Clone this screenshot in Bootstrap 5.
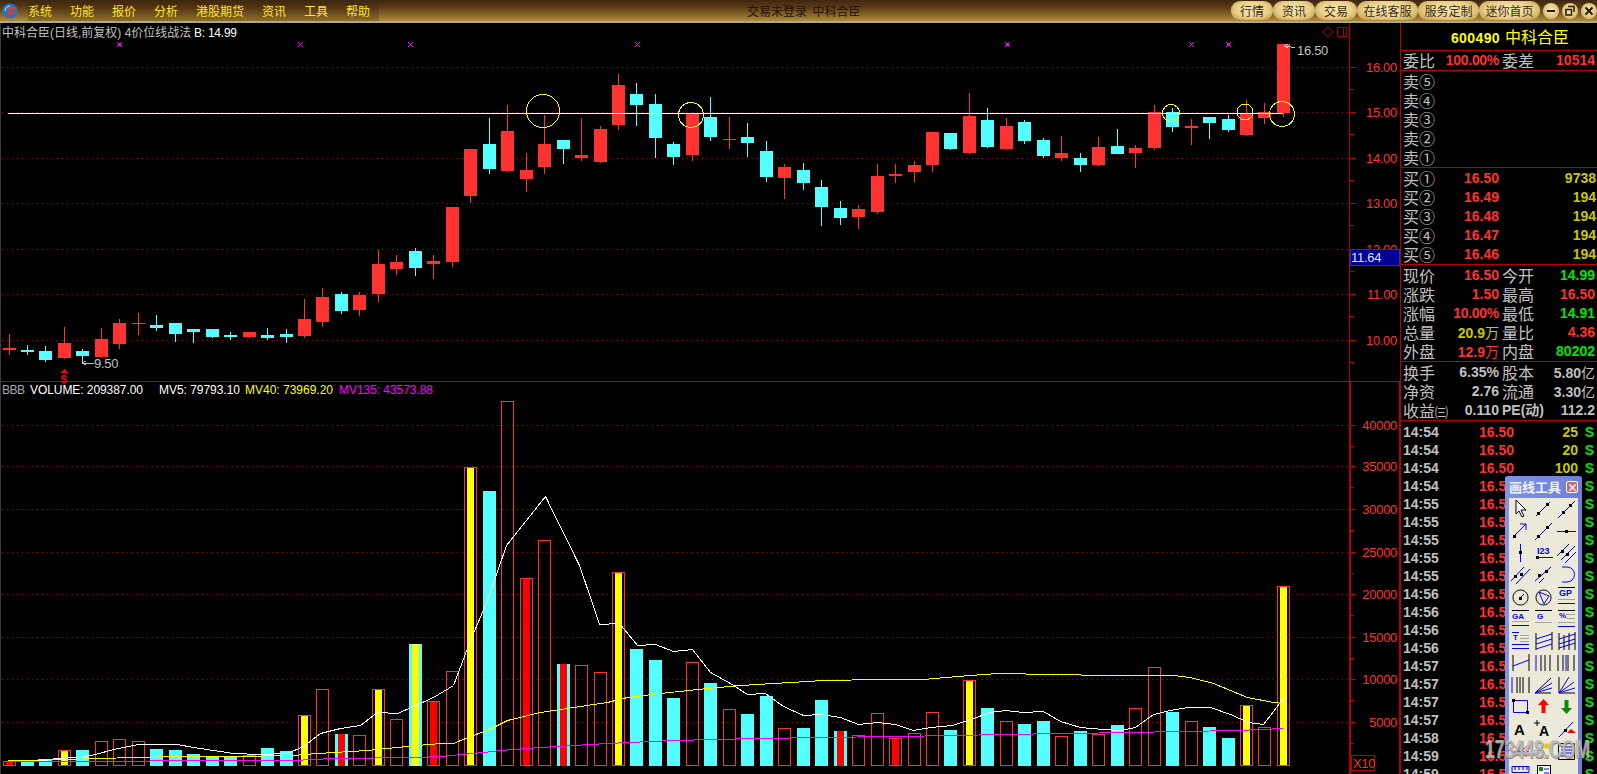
<!DOCTYPE html>
<html lang="zh-CN">
<head>
  <meta charset="UTF-8" />
  <meta name="viewport" content="width=device-width, initial-scale=1" />
  <title>中科合臣 日线</title>
  <link href="https://cdn.jsdelivr.net/npm/bootstrap@5.3.2/dist/css/bootstrap.min.css" rel="stylesheet" />
  <style>
    html, body { height: 774px; overflow: hidden; background: #000; }
    body { font-family: "Liberation Sans", "Noto Sans CJK SC", sans-serif; color: #c0c0c0; }
    .cjk { font-family: "Noto Sans CJK SC", sans-serif; }

    .title-strip {
      height: 21px;
      background: linear-gradient(#3e2610 0, #5c3c16 35%, #86662a 70%, #b08c38 100%);
    }
    .title-rule { height: 2px; background: #a8a8a0; }
    .logo-mark { margin: 0 10px 0 2px; }
    .menu-strip { gap: 18px; height: 21px; padding-right: 9px; background: rgba(60, 36, 10, .28); }
    .menu-strip span { font-size: 12px; color: #ffe628; line-height: 21px; white-space: nowrap; }
    .win-title { left: 747px; top: 0; font-size: 12px; line-height: 21px; color: #1e1204; }
    .tool-pill {
      height: 19px; padding: 0; font-size: 12px; line-height: 19px; color: #3a2a10; border: 0;
      --bs-btn-border-radius: 9px;
      background: radial-gradient(ellipse at 50% 45%, #f6eab8 0, #e8d088 55%, #b48e3c 100%);
    }
    .pill-sm { width: 42px; }
    .pill-lg { width: 61px; }
    .win-btn {
      width: 16px; height: 16px; border-radius: 50%; margin-left: 3px;
      background: radial-gradient(circle at 50% 45%, #f8edc0 0, #d8bc70 70%, #9c7a30 100%);
    }

    .chart-wrap { width: 1400px; flex: none; }
    .chart-wrap svg { display: block; }
    .crisp * { shape-rendering: crispEdges; }
    .chart-wrap text { font-family: "Liberation Sans", "Noto Sans CJK SC", sans-serif; shape-rendering: auto; }

    .quote-panel { width: 197px; flex: none; border-left: 1px solid #b80000; }
    .q-sec { border-bottom: 1px solid #b80000; }
    .q-head { height: 28px; padding-left: 22px; font-size: 16px; color: #ffff00; line-height: 27px; }
    .q-head b { font-size: 14px; letter-spacing: .4px; margin-right: 5px; }
    .q-ratio { height: 20px; }
    .q-block { height: 97px; padding-top: 1px; }
    .q-extra { height: 59px; padding-top: 1px; }
    .q-row {
      display: grid; grid-template-columns: 38px 58px 38px 58px; height: 19px; line-height: 19px;
      padding-left: 2px; white-space: nowrap;
    }
    .q-row.book { grid-template-columns: 38px 58px 97px; }
    .q-lab { font-size: 16px; color: #c0c0c0; font-family: "Noto Sans CJK SC", sans-serif; }
    .q-lab.second { padding-left: 3px; }
    .q-lab small { font-size: 13px; }
    .q-lab.pe { font-size: 14px; font-weight: 700; font-family: "Liberation Sans", "Noto Sans CJK SC", sans-serif; }
    .q-val { font-size: 14px; font-weight: 700; text-align: right; }
    .q-val em { font-style: normal; font-family: "Noto Sans CJK SC", sans-serif; font-weight: 400; font-size: 14px; }
    .q-val.pct { letter-spacing: -.3px; }
    .tone-red { color: #ff3232; }
    .tone-green { color: #00e600; }
    .tone-ylw { color: #c8c800; }
    .tone-gray { color: #c0c0c0; }

    .tick-list { padding-top: 2px; }
    .tick-row {
      display: grid; grid-template-columns: 38px 73px 64px 19px; height: 18px; line-height: 18px;
      font-size: 14px; font-weight: 700; padding-left: 2px;
    }
    .tick-row > :nth-child(2), .tick-row > :nth-child(3) { text-align: right; }
    .tick-row > :nth-child(4) { text-align: right; padding-right: 3px; color: #00e600; }

    .draw-tools {
      left: 1505px; top: 476px; width: 77px; height: 330px;
      background: linear-gradient(90deg, #7f94e6 0, #6d80d4 100%);
      padding: 0 4px;
      border-radius: 3px 3px 0 0;
    }
    .draw-title { height: 22px; color: #eef1ff; font-size: 13px; font-weight: 700; white-space: nowrap; }
    .draw-close {
      width: 12px; height: 12px; flex: none; border: 1px solid #fff; border-radius: 2px; background: #c06a78;
      color: #fff; font-size: 11px; line-height: 10px; text-align: center; font-weight: 700;
    }
    .draw-grid { display: grid; grid-template-columns: repeat(3, 23px); grid-auto-rows: 22px; background: #ece9d8; width: 69px; }
    .draw-grid svg { display: block; }
    .draw-grid text { font-family: "Liberation Sans", sans-serif; font-weight: 700; }

    .site-mark {
      left: 1485px; top: 730px; font-size: 26px; font-weight: 700; color: rgba(225, 225, 225, .62);
      transform: scaleX(.68); transform-origin: left center; white-space: nowrap; pointer-events: none;
      text-shadow: 1px 1px 0 rgba(90, 90, 90, .7), -1px 0 0 rgba(120, 120, 120, .5);
    }
  </style>
</head>
<body>
  <div class="d-flex flex-column vh-100 position-relative overflow-hidden">

    <!-- title bar -->
    <div class="title-strip d-flex align-items-center flex-shrink-0 position-relative">
      <svg class="logo-mark" width="16" height="16" viewBox="0 0 16 16">
        <circle cx="8" cy="8" r="7.5" fill="#1b78c8" />
        <path d="M3 8a5 5 0 0 1 5-5" stroke="#bfe4ff" fill="none" />
        <path d="M5 14 L7 4 H15 L14 6.500 H9.500 L9 8.500 H13 L12.500 10.500 H8.500 L7.700 14 Z" fill="#e83a20" />
      </svg>
      <div class="menu-strip d-flex cjk">
        <span>系统</span><span>功能</span><span>报价</span><span>分析</span><span>港股期货</span><span>资讯</span><span>工具</span><span>帮助</span>
      </div>
      <div class="win-title position-absolute cjk">交易未登录&nbsp;&nbsp;中科合臣</div>
      <div class="d-flex align-items-center ms-auto cjk">
        <button class="btn tool-pill pill-sm">行情</button>
        <button class="btn tool-pill pill-sm">资讯</button>
        <button class="btn tool-pill pill-sm">交易</button>
        <button class="btn tool-pill pill-lg">在线客服</button>
        <button class="btn tool-pill pill-lg">服务定制</button>
        <button class="btn tool-pill pill-lg">迷你首页</button>
        <svg class="win-btn" viewBox="0 0 16 16"><path d="M4 8H12" stroke="#2a1a04" stroke-width="2" /></svg>
        <svg class="win-btn" viewBox="0 0 16 16"><path d="M6 3.500H12V9M4 6.500H9.500V12H4Z" stroke="#2a1a04" stroke-width="1.500" fill="none" /></svg>
        <svg class="win-btn" viewBox="0 0 16 16"><path d="M4.500 4.500L11.500 11.500M11.500 4.500L4.500 11.500" stroke="#2a1a04" stroke-width="2" /></svg>
      </div>
    </div>
    <div class="title-rule"></div>

    <div class="d-flex flex-grow-1 overflow-hidden">
      <!-- kline and volume -->
      <div class="chart-wrap">
        <svg id="chart" class="crisp" width="1400" height="751" viewBox="0 23 1400 751"></svg>
      </div>

      <!-- quote panel -->
      <div class="quote-panel overflow-hidden">
        <div class="q-sec q-head text-center"><b>600490</b><span class="cjk">中科合臣</span></div>
        <div class="q-sec q-ratio">
          <div class="q-row"><span class="q-lab">委比</span><span class="q-val tone-red pct">100.00%</span><span class="q-lab second">委差</span><span class="q-val tone-red">10514</span></div>
        </div>
        <div class="q-sec q-block" id="sellBook"></div>
        <div class="q-sec q-block" id="buyBook"></div>
        <div class="q-sec q-block" id="stats"></div>
        <div class="q-sec q-extra">
          <div class="q-row"><span class="q-lab">换手</span><span class="q-val tone-gray">6.35%</span><span class="q-lab second">股本</span><span class="q-val tone-gray">5.80<em>亿</em></span></div>
          <div class="q-row"><span class="q-lab">净资</span><span class="q-val tone-gray">2.76</span><span class="q-lab second">流通</span><span class="q-val tone-gray">3.30<em>亿</em></span></div>
          <div class="q-row"><span class="q-lab">收益<small>㈢</small></span><span class="q-val tone-gray">0.110</span><span class="q-lab pe second">PE(动)</span><span class="q-val tone-gray">112.2</span></div>
        </div>
        <div class="tick-list" id="ticks"></div>
      </div>
    </div>

    <!-- floating drawing palette -->
    <div class="draw-tools position-absolute overflow-hidden">
      <div class="draw-title d-flex align-items-center justify-content-between cjk">
        <span>画线工具</span><span class="draw-close">×</span>
      </div>
      <div class="draw-grid" id="drawGrid"></div>
    </div>

    <div class="site-mark position-absolute">173448.COM</div>
  </div>

  <script src="https://cdn.jsdelivr.net/npm/bootstrap@5.3.2/dist/js/bootstrap.bundle.min.js"></script>
  <script>
    const RED = "#ff3232", CYAN = "#54ffff", YEL = "#ffff00", MAG = "#ff00ff", AXIS = "#b80000";

    // high, body top, body bottom, low, r/c
    const candles = [
      [334,348,350,355,"r"],[345,350,352,355,"c"],[346,351,360,362,"c"],[327,343,358,359,"r"],[349,351,356,363,"c"],
      [328,339,357,357,"r"],[319,323,344,349,"r"],[313,323,324,335,"r"],[315,325,328,331,"c"],[323,323,334,342,"c"],
      [329,329,332,343,"c"],[329,329,337,338,"c"],[332,335,337,340,"c"],[332,332,337,338,"r"],[328,335,338,340,"c"],
      [329,334,337,343,"c"],[299,319,336,338,"r"],[288,297,322,327,"r"],[292,294,311,314,"c"],[292,295,310,316,"r"],
      [250,264,294,302,"r"],[255,262,269,275,"r"],[248,251,268,276,"c"],[255,261,264,279,"r"],[207,207,262,267,"r"],
      [149,149,196,203,"r"],[118,144,169,174,"c"],[105,131,171,172,"r"],[153,170,179,192,"r"],[115,144,167,174,"r"],
      [140,140,149,164,"c"],[118,155,158,161,"r"],[126,129,162,163,"r"],[74,85,125,130,"r"],[83,94,105,126,"c"],
      [94,104,138,158,"c"],[142,144,157,165,"c"],[112,113,155,161,"r"],[97,117,137,141,"c"],[117,139,140,149,"r"],
      [123,137,143,157,"c"],[141,151,177,182,"c"],[164,167,178,199,"r"],[163,170,183,190,"c"],[180,187,207,226,"c"],
      [201,208,218,225,"c"],[205,209,217,229,"r"],[164,176,212,214,"r"],[164,174,176,183,"r"],[161,165,172,182,"r"],
      [132,132,165,172,"r"],[133,133,149,150,"c"],[93,116,153,154,"r"],[108,120,147,148,"c"],[118,126,149,150,"r"],
      [120,122,141,144,"c"],[138,140,156,158,"c"],[136,153,158,161,"r"],[153,158,165,172,"c"],[137,147,165,166,"r"],
      [129,146,154,154,"c"],[145,148,153,168,"r"],[105,112,148,150,"r"],[108,112,127,132,"c"],[119,126,128,145,"r"],
      [117,117,123,139,"c"],[115,119,130,132,"c"],[100,113,135,136,"r"],[103,112,118,124,"r"],[44,44,113,117,"r"]
    ];

    // top y, kind: R outline, C cyan, plus Y / R middle stripe
    const bars = [
      [761,"RR"],[760,"C"],[760,"C"],[750,"RY"],[750,"C"],[741,"R"],[739,"R"],[741,"R"],[749,"C"],[750,"C"],
      [754,"C"],[756,"C"],[756,"C"],[755,"R"],[748,"C"],[751,"C"],[715,"RY"],[689,"R"],[734,"CR"],[735,"R"],
      [689,"RY"],[719,"R"],[644,"CY"],[701,"RR"],[671,"R"],[467,"RY"],[491,"C"],[401,"R"],[578,"RR"],[540,"R"],
      [664,"CR"],[665,"R"],[672,"R"],[572,"RY"],[649,"C"],[660,"C"],[698,"C"],[662,"R"],[683,"C"],[709,"R"],
      [714,"C"],[696,"C"],[728,"R"],[728,"C"],[700,"C"],[731,"CR"],[735,"R"],[713,"R"],[738,"RR"],[733,"R"],
      [712,"R"],[730,"C"],[680,"RY"],[708,"C"],[721,"R"],[724,"C"],[721,"C"],[736,"R"],[731,"C"],[734,"R"],
      [725,"C"],[708,"R"],[667,"R"],[712,"C"],[721,"R"],[727,"C"],[738,"C"],[705,"RY"],[727,"R"],[586,"RY"]
    ];

    const mv5 = "8,760 45,760 55,758 80,757 95,754 113,749 138,744 177,744 193,747 213,750 233,753 260,754 287,753 303,746 320,733 340,728 360,725 377,712 397,713 413,706 433,697 453,685 470,640 487,600 506,545 545,496 579,565 591,600 599,624 619,623 637,645 655,644 673,651 692,649 710,672 730,683 747,694 765,693 783,706 803,715 820,714 840,717 858,724 877,722 895,724 913,730 930,727 952,725 970,719 990,712 1005,710 1023,712 1043,711 1060,721 1080,727 1103,729 1120,730 1135,727 1153,714 1170,710 1187,707 1210,707 1230,714 1248,722 1263,724 1283,698";
    const mv40 = "8,760 67,759 100,758 133,757 183,756 233,756 293,755 317,753 367,750 417,745 440,743 453,743 470,736 487,730 507,720 540,712 573,707 607,702 627,697 660,693 707,688 740,685 790,682 823,680 880,679 923,679 957,676 997,673 1053,674 1107,675 1173,675 1190,677 1213,683 1247,697 1273,702 1283,703";
    const mv135 = "8,761 293,760 333,758 417,757 440,756 483,752 500,750 540,747 607,743 673,740 757,738 890,736 960,735 997,734 1070,733 1127,732 1237,730 1283,728";

    const chart = document.getElementById("chart");
    let out = "";
    const rect = (x, y, w, h, f) => `<rect x="${x}" y="${y}" width="${w}" height="${h}" fill="${f}"/>`;
    const hline = (y, x1, x2) => `<line x1="${x1}" x2="${x2}" y1="${y + 0.5}" y2="${y + 0.5}" stroke="#b00000" stroke-dasharray="1 4"/>`;
    const label = (x, y, t, f, extra = "") => `<text x="${x}" y="${y}" font-size="13" letter-spacing="-.3" fill="${f}" ${extra}>${t}</text>`;
    const barX = i => Math.round(8.5 + 18.47 * i);

    out += rect(0, 23, 1, 751, "#3a3a3a");

    // grid and axes
    [67, 112, 158, 203, 249, 294, 340].forEach((y, i) => {
      out += hline(y, 2, 1349) + rect(1350, y, 6, 1, AXIS) + rect(1350, y + 22, 4, 1, AXIS);
      if (y !== 249) out += label(1397, y + 5, ["16.00","15.00","14.00","13.00","","11.00","10.00"][i], RED, 'text-anchor="end"');
    });
    out += label(1397, 254, "12.00", RED, 'text-anchor="end"');
    [425, 466, 509, 552, 594, 637, 679, 722].forEach((y, i) => {
      out += hline(y, 2, 1349) + rect(1350, y, 6, 1, AXIS) + rect(1350, y + 21, 4, 1, AXIS);
      out += label(1397, y + 5, String(40000 - i * 5000), RED, 'text-anchor="end"');
    });
    out += rect(1349, 23, 1, 751, AXIS) + rect(1350, 382, 1, 392, AXIS) + rect(0, 381, 1400, 1, AXIS) + rect(1399, 382, 1, 392, AXIS);

    // candles
    candles.forEach((c, i) => {
      const x = barX(i), col = c[4] === "r" ? RED : CYAN;
      out += rect(x, c[0], 1, c[3] - c[0], col);
      out += rect(x - 6, c[1], 13, Math.max(c[2] - c[1], 1), col);
    });

    // signal marks on top row, drawn pixel by pixel as small crosses
    [[119,2],[300,1],[410,1],[637,1],[1007,2],[1191,1],[1228,2]].forEach(m => {
      for (let d = -2; d <= 2; d++) {
        out += rect(m[0] + d, 44 + d, 1, 1, MAG) + rect(m[0] + d, 44 - d, 1, 1, MAG);
      }
      out += rect(m[0] - m[1] + 1, 44 - m[1] + 1, 2 * m[1] - 1, 2 * m[1] - 1, MAG);
    });

    // 4 price line
    out += rect(8, 113, 1275, 1, "#ffffff");
    [[543,111,16.5],[691,115,12.5],[1171,113,8.5],[1245,112,8],[1282,114,12.5]].forEach(c => {
      out += `<circle cx="${c[0]}" cy="${c[1]}" r="${c[2]}" fill="none" stroke="${YEL}"/>`;
    });

    // high and low notes
    out += `<path d="M1288 44L1284 46L1288 48M1284 46L1291 47L1295 48" fill="none" stroke="#c0c0c0"/>` + label(1297, 55, "16.50", "#c0c0c0");
    out += `<path d="M86 361L82 363L86 365M82 363H94" fill="none" stroke="#c0c0c0"/>` + label(94, 368, "9.50", "#c0c0c0");
    out += `<path d="M64 369L60 373H68Z" fill="#ff0000"/>` + `<text x="60.500" y="383" font-size="10" font-weight="700" fill="#ff0000">S</text>`;

    // corner marks
    out += `<path d="M1328 27L1333 32L1328 37L1323 32Z" fill="none" stroke="#a80000"/>` + `<rect x="1337.500" y="27.500" width="9" height="9" fill="none" stroke="#a80000"/><path d="M1343.500 27V37" stroke="#a80000"/>`;

    // crosshair price tag
    out += `<rect x="1350" y="249" width="49" height="16" fill="#000090" stroke="#2030c0"/>` + label(1351, 262, "11.64", "#d8e4ff");

    // headings
    out += `<text x="2" y="37" font-size="12" fill="#c0c0c0">中科合臣(日线,前复权) 4价位线战法</text>` + `<text x="194" y="37" font-size="12" fill="#ffffff" textLength="43">B: 14.99</text>`;
    out += `<text x="2" y="394" font-size="12" fill="#a8a8a8" textLength="23">BBB</text>`;
    out += `<text x="30" y="394" font-size="12" fill="#ffffff" textLength="113">VOLUME: 209387.00</text>`;
    out += `<text x="159" y="394" font-size="12" fill="#ffffff" textLength="81">MV5: 79793.10</text>`;
    out += `<text x="245" y="394" font-size="12" fill="${YEL}" textLength="88">MV40: 73969.20</text>`;
    out += `<text x="339" y="394" font-size="12" fill="${MAG}" textLength="94">MV135: 43573.88</text>`;

    // volume bars
    bars.forEach((b, i) => {
      const x = barX(i), top = b[0], h = 766 - top, kind = b[1];
      if (kind[0] === "C") out += rect(x - 6, top, 13, h, CYAN);
      if (kind[1] === "Y") out += rect(x - 3, top, 7, h, YEL);
      if (kind[1] === "R") out += rect(x - 3, top, 7, h, "#ff0000");
      if (kind[0] === "R") out += `<rect x="${x - 5.5}" y="${top + 0.5}" width="12" height="${h - 1}" fill="none" stroke="${RED}"/>`;
    });

    // moving averages, half pixel shift keeps the flat parts from dropping out
    out += `<g transform="translate(.5 .5)">`;
    out += `<polyline points="${mv5}" fill="none" stroke="#ffffff"/>`;
    out += `<polyline points="${mv40}" fill="none" stroke="${YEL}"/>`;
    out += `<polyline points="${mv135}" fill="none" stroke="${MAG}"/>`;
    out += `</g>`;

    // multiplier box
    out += `<rect x="1351.500" y="755.500" width="23" height="15" fill="none" stroke="${AXIS}"/>` + label(1353, 768, "X10", RED);
    chart.innerHTML = out;

    // order book
    const book = (id, prefix, marks, rows) => {
      document.getElementById(id).innerHTML = marks.map((m, i) => {
        const r = rows[i] || ["", ""];
        return `<div class="q-row book"><span class="q-lab">${prefix}${m}</span><span class="q-val tone-red">${r[0]}</span><span class="q-val tone-ylw">${r[1]}</span></div>`;
      }).join("");
    };
    book("sellBook", "卖", ["⑤","④","③","②","①"], []);
    book("buyBook", "买", ["①","②","③","④","⑤"], [["16.50","9738"],["16.49","194"],["16.48","194"],["16.47","194"],["16.46","194"]]);

    const wan = '<em>万</em>';
    const stats = [
      ["现价","16.50","tone-red","今开","14.99","tone-green"],
      ["涨跌","1.50","tone-red","最高","16.50","tone-red"],
      ["涨幅","10.00%","tone-red pct","最低","14.91","tone-green"],
      ["总量","20.9" + wan,"tone-ylw","量比","4.36","tone-red"],
      ["外盘","12.9" + wan,"tone-red","内盘","80202","tone-green"]
    ];
    document.getElementById("stats").innerHTML = stats.map(s =>
      `<div class="q-row"><span class="q-lab">${s[0]}</span><span class="q-val ${s[2]}">${s[1]}</span><span class="q-lab second">${s[3]}</span><span class="q-val ${s[5]}">${s[4]}</span></div>`
    ).join("");

    // tick list, the palette hides the volumes below the third row
    const times = ["14:54","14:54","14:54","14:54","14:55","14:55","14:55","14:55","14:55","14:56","14:56","14:56","14:56","14:57","14:57","14:57","14:57","14:58","14:59","14:59"];
    const vols = ["25","20","100"];
    document.getElementById("ticks").innerHTML = times.map((t, i) =>
      `<div class="tick-row"><span class="tone-gray">${t}</span><span class="tone-red">16.50</span><span class="tone-ylw">${vols[i] || ""}</span><span>S</span></div>`
    ).join("");

    // drawing tools
    const dot = (x, y) => `<rect x="${x}" y="${y}" width="3" height="3" fill="#000"/>`;
    const blue = d => `<path d="${d}" stroke="#0000ff" fill="none"/>`;
    const black = d => `<path d="${d}" stroke="#000" fill="none"/>`;
    const gray = d => `<path d="${d}" stroke="#a8a498" fill="none"/>`;
    const tag = (x, y, t, s = 8) => `<text x="${x}" y="${y}" font-size="${s}" fill="#0000ff">${t}</text>`;
    const tools = [
      `<path d="M7 2V16L10 13L13 19L15 18L12 12H17Z" fill="#fff" stroke="#000"/>`,
      blue("M4 18L18 4") + dot(5, 14) + dot(14, 5),
      blue("M3 20L20 3") + dot(7, 13) + dot(14, 6),
      blue("M4 17L17 4M11 4H17V10") + dot(4, 15),
      blue("M3 20L20 3") + dot(5, 15) + dot(14, 6),
      blue("M2 11.500H21") + dot(10, 10),
      blue("M11.500 2V20") + dot(10, 9),
      tag(5, 12, "I23", 9) + dot(4, 14) + blue("M5 15.500H21"),
      blue("M2 14L14 2M6 18L20 4M10 21L21 10") + dot(6, 8) + dot(11, 11),
      blue("M2 17L15 3M7 20L21 5") + dot(5, 11) + dot(11, 9),
      blue("M3 17L19 3M7 19L12 14") + dot(6, 10) + dot(13, 6),
      blue("M7 3H12A7.500 7.500 0 0 1 12 18H7"),
      black("M11.500 4a7.500 7.500 0 1 0 .01 0") + blue("M11 12L15 8") + dot(10, 11),
      black("M11.500 4a7.500 7.500 0 1 0 .01 0") + blue("M7 6L17 10L12 18Z"),
      tag(4, 10, "GP", 9) + black("M3 1.500H20") + gray("M3 13.500H20") + blue("M3 17.500H20"),
      tag(3, 11, "GA", 8) + black("M3 2.500H20") + gray("M3 13.500H20") + blue("M3 17.500H20"),
      tag(5, 11, "G", 8) + black("M3 2.500H20") + gray("M3 14.500H20"),
      tag(4, 10, "%", 8) + black("M3 2.500H20") + gray("M11 6.500H20M11 10.500H20M3 14.500H20") + blue("M3 18.500H20"),
      tag(4, 10, "T", 8) + blue("M3 2.500H10M3 14.500H20M3 18.500H20") + gray("M11 5.500H20M11 8.500H20M11 11.500H20"),
      black("M4 3V20M20 2V20") + blue("M4 9L20 4M4 14L20 9M4 19L20 14"),
      black("M4 3V20M9 5V20M14 3V20M20 2V20") + blue("M4 9L20 4M4 14L20 9M4 18L20 13"),
      black("M4 3V19M20 2V19") + blue("M4 14L20 8"),
      blue("M4 3V19") + black("M9 3V19M13 3V19M18 3V19"),
      black("M3 3V19M8 3V19M13 3V19M19 3V19") + blue("M11 3V19"),
      blue("M3 3V19") + black("M8 3V19M11 3V19M14 3V19M20 3V19"),
      black("M3 19L19 4M3 19H19") + blue("M3 19L20 9M3 19L20 14"),
      black("M4 3V19H20") + blue("M4 19L14 3M4 19L19 8M4 19L20 14"),
      blue("M4.500 4.500H18.500V16.500H4.500Z") + dot(3, 3) + dot(17, 15),
      `<path d="M11.500 3L17 9H13.500V17H9.500V9H6Z" fill="#ff0000"/>`,
      `<path d="M9.500 4H13.500V12H17L11.500 18L6 12H9.500Z" fill="#0a8a0a"/>`,
      `<text x="5" y="17" font-size="15" fill="#000">A</text>`,
      `<text x="7" y="18" font-size="14" fill="#000">A</text>` + black("M5 2V8M2 5H8"),
      blue("M4 19L18 4") + dot(9, 11) + `<path d="M12 15L16 11L21 15Z" fill="#ff0000"/>`,
      `<path d="M5 6L18 17M18 6L5 17" stroke="#e83030"/>` + blue("M3 12H20"),
      `<circle cx="15" cy="6" r="3" fill="#e8d020"/>` + gray("M4 18L10 8L15 18Z"),
      black("M3.500 3.500H19.500V19.500H3.500Z") + blue("M6 7H17M6 10H17M6 13H17M6 16H17"),
      blue("M3 4.500H20V10.500H3ZM6 4V8M10 4V8M14 4V8M18 4V8"),
      `<rect x="5.500" y="3.500" width="13" height="11" fill="#fff" stroke="#000"/><rect x="7" y="5" width="4" height="4" fill="#0a8a0a"/>` + blue("M12 7H17M12 11H17")
    ];
    document.getElementById("drawGrid").innerHTML = tools.map(t => `<svg width="23" height="22" viewBox="0 0 23 22">${t}</svg>`).join("");
  </script>
</body>
</html>
